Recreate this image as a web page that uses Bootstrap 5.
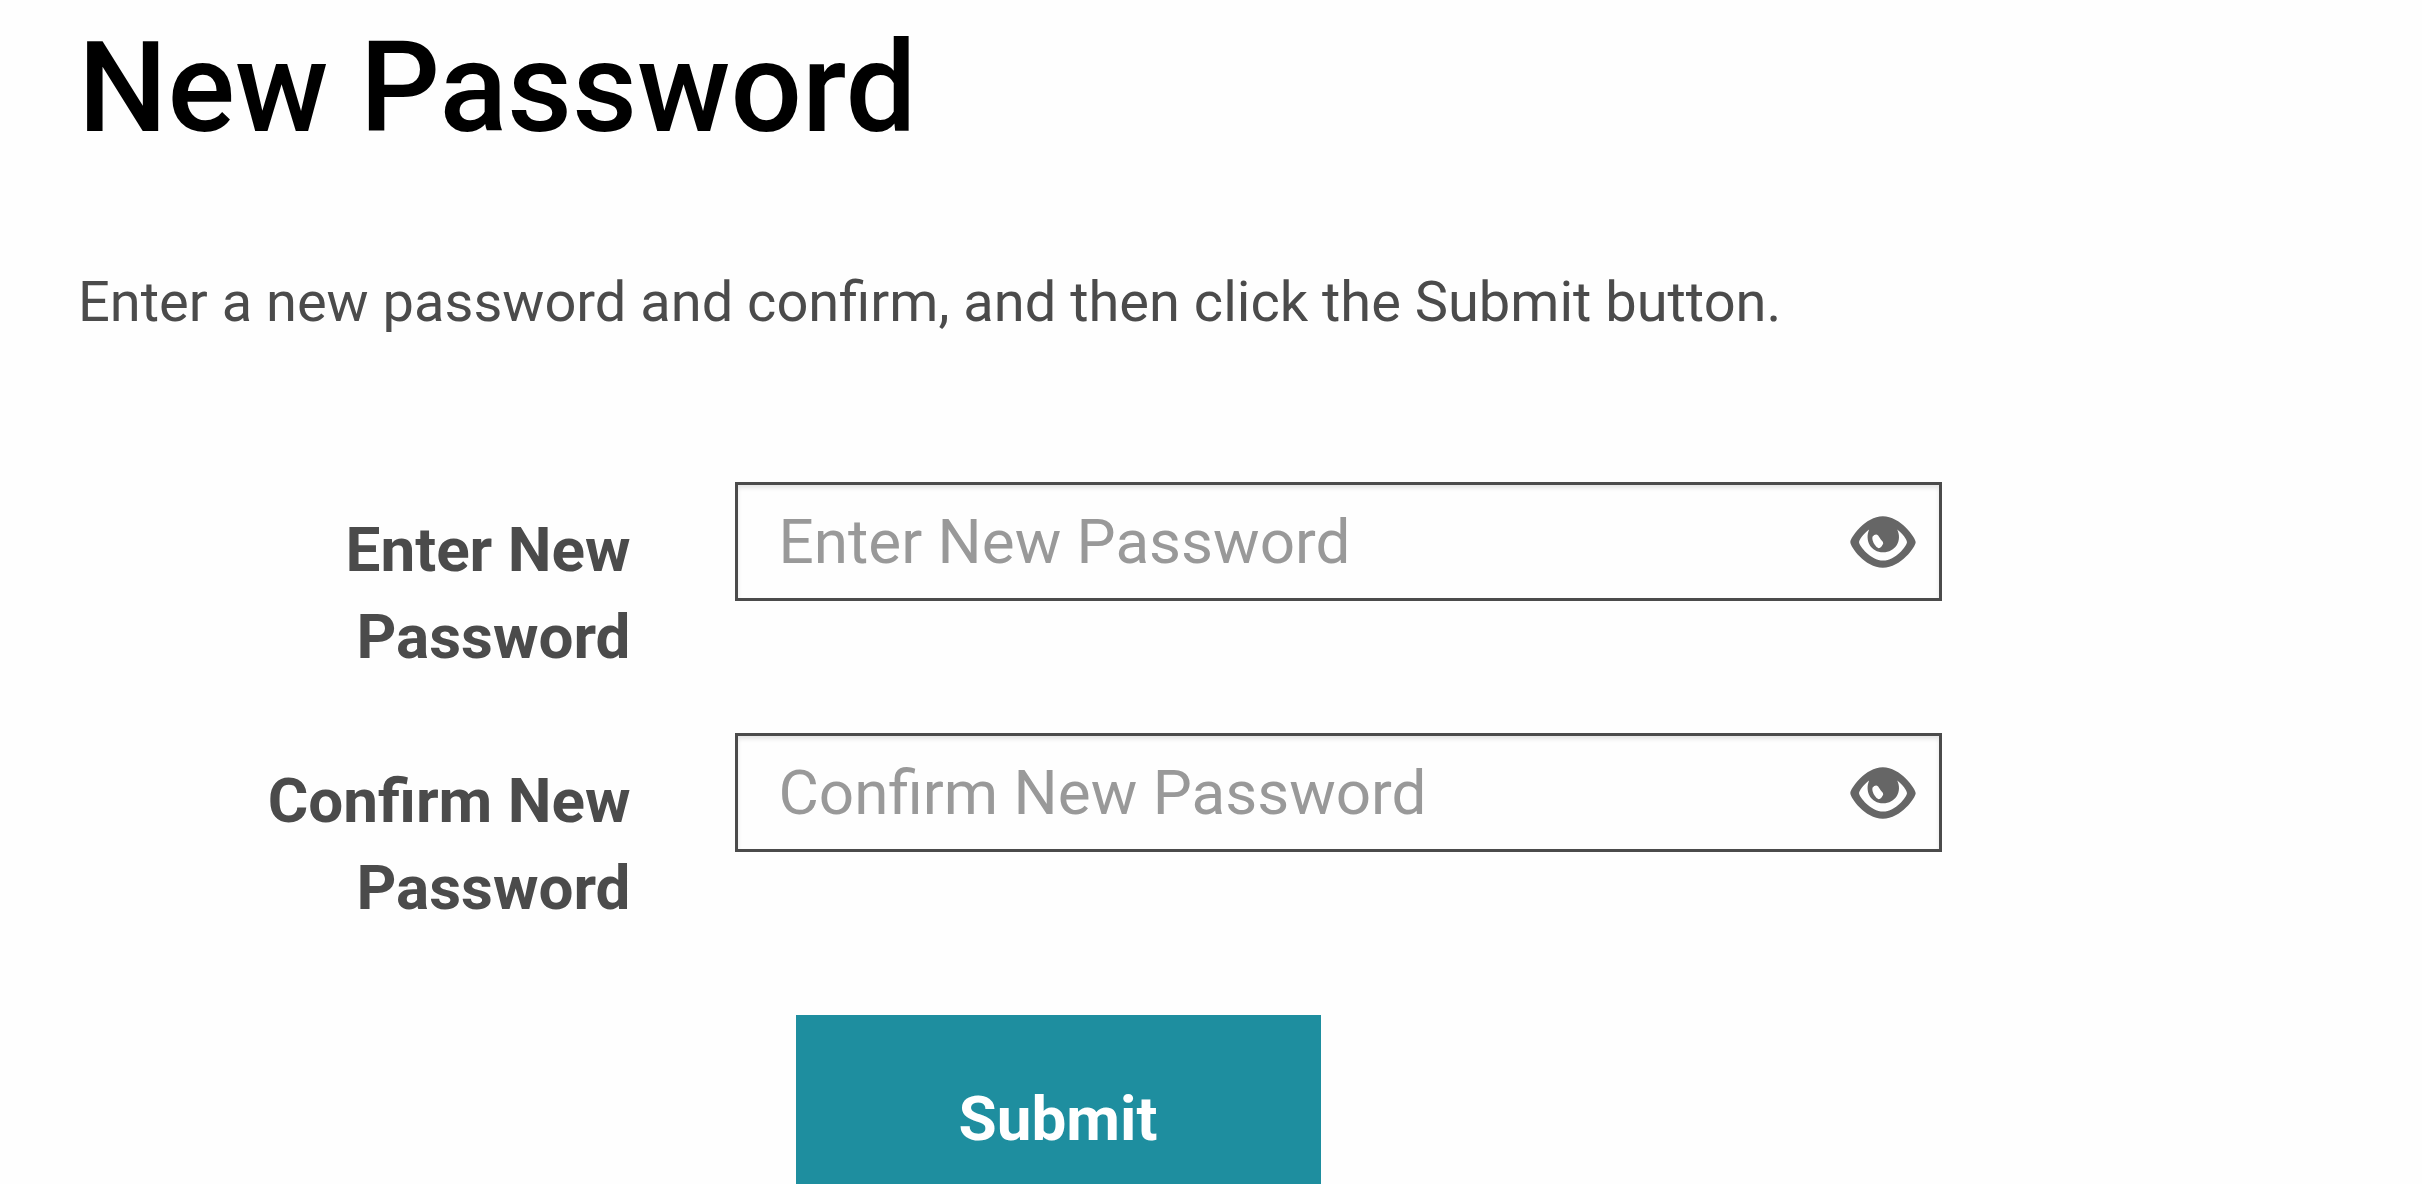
<!DOCTYPE html>
<html lang="en">
<head>
<meta charset="utf-8">
<meta name="viewport" content="width=device-width, initial-scale=1">
<title>New Password</title>
<link rel="stylesheet" href="https://cdn.jsdelivr.net/npm/bootstrap@5.3.0/dist/css/bootstrap.min.css">
<style>
body { font-family: Roboto, sans-serif; color: #4b4b4b; background: #fefefe; }
.page { padding: 13px 78px 0; }
.page-title { font-size: 126px; line-height: 150px; font-weight: 500; color: #000; margin-bottom: 97px; }
.intro { font-size: 56px; line-height: 84px; margin-bottom: 138px; }
.field-row { margin-bottom: 54px; }
.field-label { font-size: 62px; line-height: 87px; padding: 24px 14px 0 0; margin-bottom: -1px; }
.field-col { padding: 0 24px 0 90px; }
.pw-input, .pw-input:focus { height: 119px; font-size: 62px; color: #4b4b4b; background: #fefefe; border: 3px solid #4b4b4b; padding: 0 120px 0 41px; box-shadow: inset 0 3px 4px rgba(0,0,0,.1); }
.pw-input::placeholder { color: #999; }
.eye-btn { right: 26px; }
.eye-btn svg { width: 66px; height: 52px; }
.action-row { padding-top: 31px; }
.action-col { padding-left: 151px; }
.submit-btn, .submit-btn:hover { min-width: 525px; height: 206px; font-size: 62px; color: #fff; background: #1e8e9f; border: 0; }
</style>
</head>
<body class="vh-100 overflow-hidden">
<main class="container-fluid page">
  <h1 class="page-title">New Password</h1>
  <p class="intro">Enter a new password and confirm, and then click the Submit button.</p>
  <form>
    <div class="row g-0 field-row">
      <label for="newPassword" class="col-3 field-label fw-bold text-end">Enter New Password</label>
      <div class="col-7 field-col">
        <div class="position-relative">
          <input type="password" id="newPassword" class="form-control rounded-0 pw-input" placeholder="Enter New Password">
          <button type="button" class="btn p-0 border-0 d-flex position-absolute top-50 translate-middle-y eye-btn" aria-label="Show new password">
            <svg viewBox="90 133 197 155" aria-hidden="true"><path fill="#666" fill-rule="evenodd" d="M91 211C91 198 136 134 188 134S286 198 286 211S242 287 188 287S91 224 91 211ZM147 173C132 184 117 203 117 211C117 221 152 266 189 266S260 221 260 211C260 203 248 186 231 173C247 207 225 241 189 241S133 207 147 173ZM157 195Q155 206 164 219Q174 236 184 224L189 216Q190 210 182 203L174 191Q166 184 157 195Z"/></svg>
          </button>
        </div>
      </div>
    </div>
    <div class="row g-0 field-row">
      <label for="confirmPassword" class="col-3 field-label fw-bold text-end">Confirm New Password</label>
      <div class="col-7 field-col">
        <div class="position-relative">
          <input type="password" id="confirmPassword" class="form-control rounded-0 pw-input" placeholder="Confirm New Password">
          <button type="button" class="btn p-0 border-0 d-flex position-absolute top-50 translate-middle-y eye-btn" aria-label="Show confirmed password">
            <svg viewBox="90 133 197 155" aria-hidden="true"><path fill="#666" fill-rule="evenodd" d="M91 211C91 198 136 134 188 134S286 198 286 211S242 287 188 287S91 224 91 211ZM147 173C132 184 117 203 117 211C117 221 152 266 189 266S260 221 260 211C260 203 248 186 231 173C247 207 225 241 189 241S133 207 147 173ZM157 195Q155 206 164 219Q174 236 184 224L189 216Q190 210 182 203L174 191Q166 184 157 195Z"/></svg>
          </button>
        </div>
      </div>
    </div>
    <div class="row g-0 action-row">
      <div class="col-7 offset-3 action-col">
        <button type="submit" class="btn rounded-0 fw-bold submit-btn">Submit</button>
      </div>
    </div>
  </form>
</main>
<script src="https://cdn.jsdelivr.net/npm/bootstrap@5.3.0/dist/js/bootstrap.bundle.min.js"></script>
</body>
</html>
